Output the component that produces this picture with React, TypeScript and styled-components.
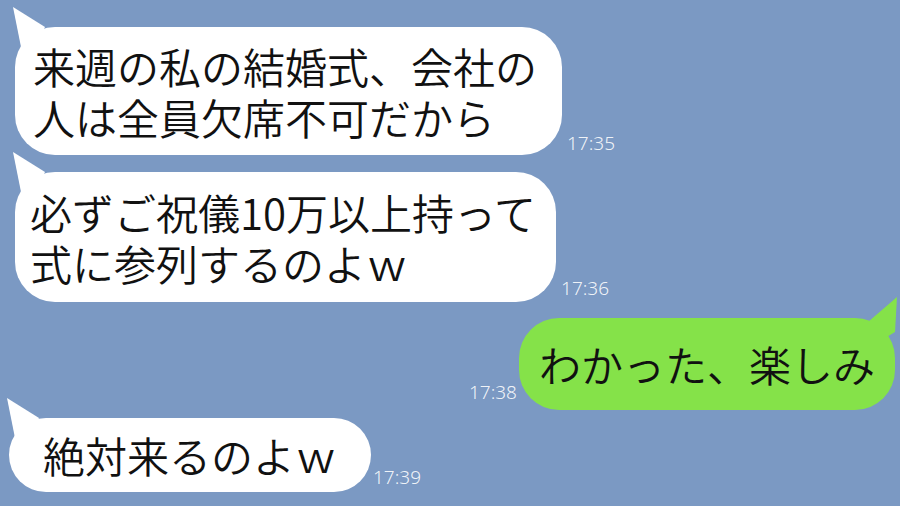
import React from 'react';
import styled, { createGlobalStyle } from 'styled-components';

const GlobalStyle = createGlobalStyle`
  html, body {
    margin: 0;
    padding: 0;
    background: #7b99c3;
  }
`;

const Screen = styled.div`
  width: 900px;
  height: 506px;
  overflow: hidden;
  box-sizing: border-box;
  padding: 27px 5px 0 9px;
  background: #7b99c3;
  display: flex;
  flex-direction: column;
  font-family: "Noto Sans CJK JP", "Noto Sans", sans-serif;
`;

const Row = styled.div<{ $mine?: boolean; $gap: number; $indent?: number; $space?: number }>`
  display: flex;
  align-items: flex-end;
  gap: ${(p) => p.$space ?? 5}px;
  justify-content: ${(p) => (p.$mine ? 'flex-end' : 'flex-start')};
  margin-top: ${(p) => p.$gap}px;
  padding-left: ${(p) => p.$indent ?? 0}px;
`;

const Bubble = styled.div<{ $mine?: boolean; $pad: string }>`
  position: relative;
  background: ${(p) => (p.$mine ? '#85e249' : '#ffffff')};
  border-radius: 40px;
  padding: ${(p) => p.$pad};
  font-family: "Noto Sans CJK JP", sans-serif;
  font-size: 42px;
  font-weight: 350;
  line-height: 51px;
  color: #111;
  white-space: nowrap;
`;

const Line = styled.div`
  display: block;
`;

const Tail = styled.svg<{ $mine?: boolean }>`
  position: absolute;
  top: -24px;
  width: 50px;
  height: 50px;
  overflow: visible;
  ${(p) => (p.$mine ? 'right: -10px;' : 'left: -10px;')}
`;

const Time = styled.span<{ $drop: number }>`
  font-family: "Noto Sans", "Open Sans", sans-serif;
  font-size: 19px;
  font-weight: 300;
  line-height: 1;
  color: rgba(255, 255, 255, 0.9);
  margin-bottom: ${(p) => p.$drop}px;
  flex-shrink: 0;
`;

const TheirTail = () => (
  <Tail viewBox="0 0 50 50">
    <polygon points="8,4 40,24 30,44 16,44" fill="#ffffff" />
  </Tail>
);

const MyTail = () => (
  <Tail $mine viewBox="0 0 50 50">
    <polygon points="42,3 13,28 30,44 40,38" fill="#85e249" />
  </Tail>
);

export default function App() {
  return (
    <>
      <GlobalStyle />
      <Screen>
        <Row $gap={0} $indent={6}>
          <Bubble $pad="13px 25px 13px 18px">
            <TheirTail />
            <Line>来週の私の結婚式、会社の</Line>
            <Line>人は全員欠席不可だから</Line>
          </Bubble>
          <Time $drop={2}>17:35</Time>
        </Row>

        <Row $gap={17} $indent={6}>
          <Bubble $pad="14px 20px 14px 15px">
            <TheirTail />
            <Line>必ずご祝儀10万以上持って</Line>
            <Line>式に参列するのよｗ</Line>
          </Bubble>
          <Time $drop={4}>17:36</Time>
        </Row>

        <Row $mine $gap={16} $space={2}>
          <Time $drop={8}>17:38</Time>
          <Bubble $mine $pad="20px 20px 21px 20px">
            <MyTail />
            <Line>わかった、楽しみ</Line>
          </Bubble>
        </Row>

        <Row $gap={8} $space={2}>
          <Bubble $pad="11px 34px 12px 34px">
            <TheirTail />
            <Line>絶対来るのよｗ</Line>
          </Bubble>
          <Time $drop={5}>17:39</Time>
        </Row>
      </Screen>
    </>
  );
}
